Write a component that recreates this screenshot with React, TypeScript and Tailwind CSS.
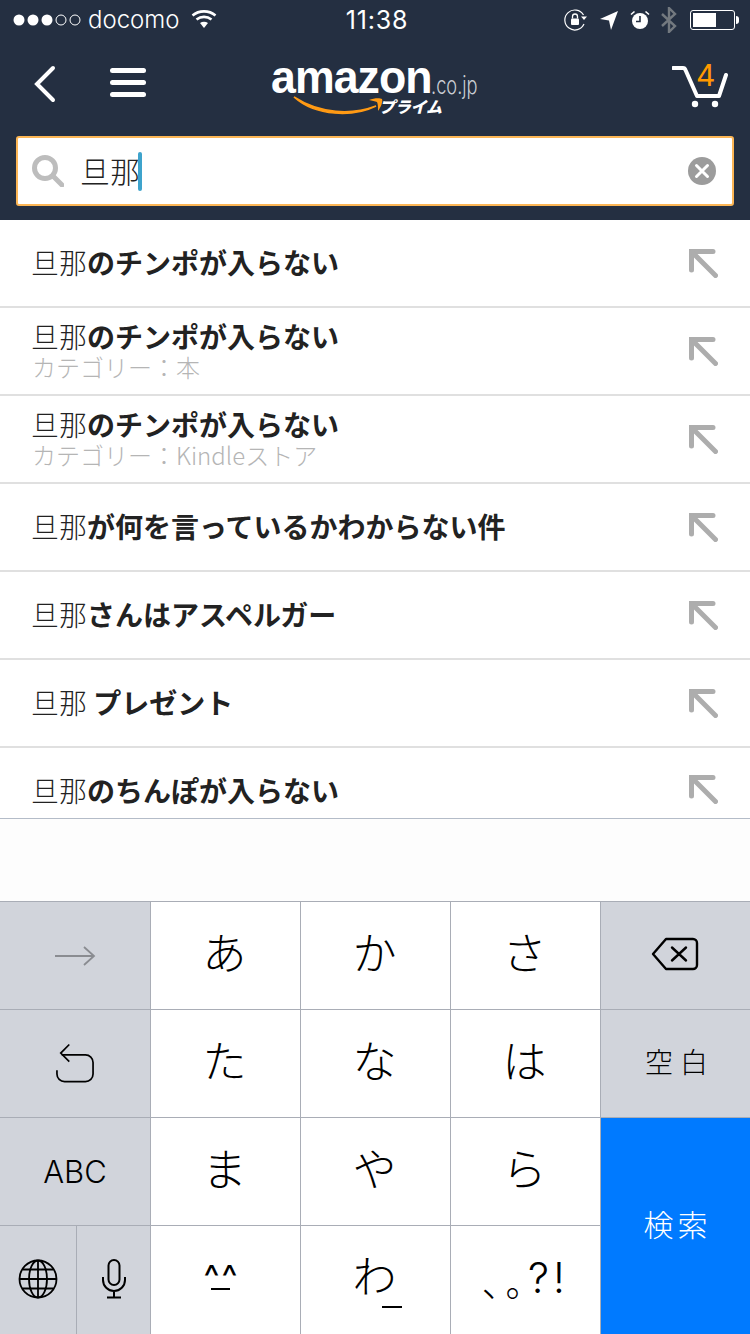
import React from 'react';

const jp = '[font-family:"Noto_Sans_CJK_JP","Noto_Sans",sans-serif]';

const suggestions = [
  { bold: 'のチンポが入らない' },
  { bold: 'のチンポが入らない', sub: 'カテゴリー：本' },
  { bold: 'のチンポが入らない', sub: 'カテゴリー：Kindleストア' },
  { bold: 'が何を言っているかわからない件' },
  { bold: 'さんはアスペルガー' },
  { bold: ' プレゼント' },
];

const StatusBar = () => (
  <div className="flex h-10 items-center justify-between pl-[13px] pr-[11px] text-white">
    <div className="flex w-[260px] items-center">
      <svg width="68" height="14" viewBox="0 0 68 14">
        {[6, 20, 34].map((cx) => (
          <circle key={cx} cx={cx} cy="7" r="5.5" fill="#fff" />
        ))}
        {[48, 62].map((cx) => (
          <circle key={cx} cx={cx} cy="7" r="5" fill="none" stroke="#fff" strokeWidth="1" />
        ))}
      </svg>
      <span className="ml-[7px] font-['Inter',sans-serif] text-[24px] leading-none font-light">docomo</span>
      <svg className="ml-[11px] mt-[-2px]" width="26" height="20" viewBox="0 0 26 20" fill="none" stroke="#fff" strokeWidth="2.6">
        <path d="M1.5 6.5C8 1 18 1 24.5 6.5" />
        <path d="M5.5 10.5C10 7 16 7 20.5 10.5" />
        <path d="M13 19l-4-5c2.4-1.6 5.6-1.6 8 0z" fill="#fff" stroke="none" />
      </svg>
    </div>
    <span className="ml-[2px] font-['Inter',sans-serif] text-[25px] leading-none font-normal tracking-[0.8px]">11:38</span>
    <div className="flex w-[260px] items-center justify-end">
      <svg width="24" height="22" viewBox="0 0 24 22" fill="none">
        <path d="M20 15A10 10 0 1 1 19.5 6" stroke="#fff" strokeWidth="1.2" />
        <path d="M17 7.5h6l-3 3.5z" fill="#fff" />
        <rect x="7" y="9.5" width="8" height="6.5" rx="1" fill="#fff" />
        <path d="M8.5 9.5V7.5a2.5 2.5 0 0 1 5 0v2" stroke="#fff" strokeWidth="1.3" />
      </svg>
      <svg className="ml-[12px]" width="18" height="19" viewBox="0 0 18 19">
        <path d="M18 0L11 19l-2-9.5L0 8z" fill="#fff" />
      </svg>
      <svg className="ml-[12px]" width="20" height="20" viewBox="0 0 20 20" fill="none">
        <circle cx="10" cy="11" r="8" fill="#fff" />
        <path d="M10 6v5.5H6" stroke="#242f41" strokeWidth="1.6" />
        <path d="M1 4.5L4.5 1.5M19 4.5L15.5 1.5" stroke="#fff" strokeWidth="1.6" />
      </svg>
      <svg className="ml-[11px]" width="16" height="26" viewBox="0 0 16 26" fill="none" stroke="#73797f" strokeWidth="2.4">
        <path d="M1 7l13 12-6 6V1l6 6L1 19" />
      </svg>
      <div className="ml-[13px] flex items-center">
        <div className="h-[20px] w-[45px] rounded-[3px] border border-white p-[2px]">
          <div className="h-full w-[23px] bg-white" />
        </div>
        <div className="ml-px h-[8px] w-[3px] rounded-r-sm bg-white" />
      </div>
    </div>
  </div>
);

const AmazonLogo = () => (
  <div className="relative h-[56px] w-[206px] text-white">
    <span className="absolute top-[0px] left-0 origin-left scale-x-[0.95] font-['Liberation_Sans',sans-serif] text-[47px] leading-[36px] font-bold tracking-[-1px]">
      amazon
    </span>
    <span className="absolute top-[17px] left-[160px] origin-left scale-x-[0.76] font-['Inter',sans-serif] text-[24px] leading-[20px] font-light text-[#c9cdd3]">
      .co.jp
    </span>
    <svg className="absolute top-[37px] left-[22px]" width="102" height="22" viewBox="0 0 102 22" fill="none">
      <path d="M1 1c26 17 58 18 82 9-22 11-60 11-82-9z" fill="#ff9a14" stroke="#ff9a14" strokeWidth="1.5" />
      <path d="M76 4c5-2 11-2 13-1 1 3-1 8-4 12 0-4 0-7-1-9-2-1-5-1-8-2z" fill="#ff9a14" />
    </svg>
    <span className={`absolute top-[37px] left-[108px] ${jp} text-[16px] leading-[20px] font-black tracking-[-0.2px] italic`}>
      プライム
    </span>
  </div>
);

const NavBar = () => (
  <div className="flex h-[96px] items-start pt-[23px] pl-[33px]">
    <svg width="24" height="38" viewBox="0 0 24 38" fill="none" stroke="#fff" strokeWidth="4" strokeLinecap="round" className="mt-[2px]">
      <path d="M20 3L4 19l16 16" />
    </svg>
    <div className="mt-[5px] ml-[53px] flex w-[36px] flex-col gap-[7px]">
      <div className="h-[5px] rounded-sm bg-white" />
      <div className="h-[5px] rounded-sm bg-white" />
      <div className="h-[5px] rounded-sm bg-white" />
    </div>
    <div className="mt-[-4px] ml-[125px]">
      <AmazonLogo />
    </div>
    <div className="relative ml-[195px] h-[42px] w-[57px]">
      <svg className="mt-[3px]" width="57" height="42" viewBox="0 0 57 42" fill="none">
        <path d="M1 2h10c1 0 2 .5 2.500 2l11.500 26h22L54 9" stroke="#fff" strokeWidth="4" strokeLinejoin="round" strokeLinecap="round" />
        <circle cx="23" cy="38" r="3.200" fill="#fff" />
        <circle cx="43" cy="38" r="3.200" fill="#fff" />
      </svg>
      <span className="absolute top-[-5px] left-[24px] font-['Inter',sans-serif] text-[30px] leading-[34px] text-[#f90]">4</span>
    </div>
  </div>
);

const SearchBox = () => (
  <div className="mx-4 flex h-[70px] items-center rounded-[3px] border-2 border-[#fcb655] bg-white pr-[16px] pl-[14px]">
    <svg width="32" height="32" viewBox="0 0 32 32" fill="none" stroke="#bdbdbd">
      <circle cx="13" cy="13" r="10.500" strokeWidth="5" />
      <path d="M21 21l9 9" strokeWidth="5" strokeLinecap="round" />
    </svg>
    <span className={`ml-[16px] mt-[-3px] ${jp} text-[30px] leading-none font-light text-[#222]`}>旦那</span>
    <div className="ml-[-2px] h-[39px] w-1 rounded-full bg-[#3ea3cc]" />
    <svg className="ml-auto" width="28" height="28" viewBox="0 0 28 28">
      <circle cx="14" cy="14" r="14" fill="#9c9c9c" />
      <path d="M8.500 8.500l11 11M19.500 8.500l-11 11" stroke="#fff" strokeWidth="3" strokeLinecap="round" />
    </svg>
  </div>
);

const FillArrow = () => (
  <svg width="30" height="30" viewBox="0 0 30 30" fill="none" stroke="#adadad" strokeWidth="5" strokeLinejoin="miter">
    <path d="M3.500 22V3.500H25" strokeLinecap="round" />
    <path d="M4 4L27.500 27.500" strokeLinecap="round" />
  </svg>
);

const SuggestionText = ({ bold }: { bold: string }) => (
  <div className={`${jp} text-[28px] leading-[32px] whitespace-pre text-[#222]`}>
    <span className="font-light">旦那</span>
    <span className="font-semibold">{bold}</span>
  </div>
);

const SuggestionRow = ({ bold, sub }: { bold: string; sub?: string }) => (
  <div className="flex h-[88px] items-center justify-between border-b-2 border-[#e0e0e0] pr-[32px] pl-[31px]">
    <div className={sub ? 'mt-[-1px]' : 'mt-[-2px]'}>
      <SuggestionText bold={bold} />
      {sub && <div className={`${jp} pl-[1px] text-[24px] leading-[30px] font-light text-[#b5b5b5]`}>{sub}</div>}
    </div>
    <div>
      <FillArrow />
    </div>
  </div>
);

const Key = ({ children, gray, className }: { children?: React.ReactNode; gray?: boolean; className?: string }) => (
  <div className={`flex items-center justify-center border-t border-l border-[#a9adb6] first:border-l-0 ${gray ? 'bg-[#d1d4db]' : 'bg-white'} ${className ?? ''}`}>
    {children}
  </div>
);

const Kana = ({ children }: { children: React.ReactNode }) => (
  <span className={`${jp} mt-[-10px] ml-[-2px] inline-block text-[44px] leading-none font-light text-black`}>{children}</span>
);

const Keyboard = () => (
  <div className="grid grid-cols-[150px_150px_150px_150px_150px] grid-rows-[108px_108px_108px_109px] bg-[#a9adb6]">
    <Key gray className="border-l-0">
      <svg width="42" height="22" viewBox="0 0 42 22" fill="none" stroke="#8a8c91" strokeWidth="1.800">
        <path d="M1 11h39M30 2l10 9-10 9" />
      </svg>
    </Key>
    <Key><Kana>あ</Kana></Key>
    <Key><Kana>か</Kana></Key>
    <Key><Kana>さ</Kana></Key>
    <Key gray>
      <svg width="48" height="34" viewBox="0 0 48 34" fill="none" stroke="#000" strokeWidth="2.400" strokeLinejoin="round" className="mt-[-3px] ml-[-2px]">
        <path d="M15 2h27a4 4 0 0 1 4 4v22a4 4 0 0 1-4 4H15L2 17z" />
        <path d="M21 10.500l14 13M35 10.500l-14 13" strokeLinecap="round" />
      </svg>
    </Key>

    <Key gray className="border-l-0">
      <svg width="38" height="41" viewBox="0 0 40 42" fill="none" stroke="#000" strokeWidth="1.800">
        <path d="M1 28v4a8 8 0 0 0 8 8h22a8 8 0 0 0 8-8v-12a8 8 0 0 0-8-8H6" />
        <path d="M14 1L5 10l9 9" />
      </svg>
    </Key>
    <Key><Kana>た</Kana></Key>
    <Key><Kana>な</Kana></Key>
    <Key><Kana>は</Kana></Key>
    <Key gray>
      <span className={`${jp} mt-[-5px] ml-[9px] text-[28px] leading-none font-light tracking-[7px] text-black`}>空白</span>
    </Key>

    <Key gray className="border-l-0">
      <span className="font-['Inter',sans-serif] text-[31px] leading-none font-light text-black">ABC</span>
    </Key>
    <Key><Kana>ま</Kana></Key>
    <Key><Kana>や</Kana></Key>
    <Key><Kana>ら</Kana></Key>
    <div className="row-span-2 flex items-center justify-center border-t border-l border-[#a9adb6] bg-[#007aff]">
      <span className={`${jp} mt-[-7px] ml-[4px] text-[30px] leading-none font-light tracking-[4px] text-white`}>検索</span>
    </div>

    <div className="grid grid-cols-[76px_74px] border-t border-[#a9adb6] bg-[#d1d4db]">
      <div className="flex items-center justify-center">
        <svg className="mt-[-2px]" width="40" height="40" viewBox="0 0 40 40" fill="none" stroke="#000" strokeWidth="1.800">
          <circle cx="20" cy="20" r="18.500" />
          <ellipse cx="20" cy="20" rx="9" ry="18.500" />
          <path d="M20 1.500v37M1.500 20h37M4.500 10.500h31M4.500 29.500h31" />
        </svg>
      </div>
      <div className="flex items-center justify-center border-l border-[#a9adb6]">
        <svg className="mt-[-2px]" width="24" height="40" viewBox="0 0 24 40" fill="none" stroke="#000" strokeWidth="2">
          <rect x="6.500" y="1" width="11" height="25" rx="5.500" />
          <path d="M1 18v3a11 11 0 0 0 22 0v-3M12 32v6M5 38.500h14" />
        </svg>
      </div>
    </div>
    <Key>
      <span className="relative mt-[-6px] mr-[8px] font-['Inter',sans-serif] text-[34px] leading-none tracking-[2px] text-black">
        ^^
        <span className="absolute top-[28px] left-[8px] h-[2px] w-[19px] bg-black" />
      </span>
    </Key>
    <Key>
      <span className="relative">
        <Kana>わ</Kana>
        <span className="absolute right-[-5px] bottom-[-9px] h-[2px] w-[20px] bg-black" />
      </span>
    </Key>
    <Key>
      <span className="mt-[-4px] flex items-end text-black">
        <span className={`${jp} text-[36px] leading-none font-light tracking-[5px] [font-feature-settings:"palt"]`}>、。</span>
        <span className="font-['Inter',sans-serif] text-[42px] leading-none font-light tracking-[4px]">?!</span>
      </span>
    </Key>
  </div>
);

export default function App() {
  return (
    <div className="flex h-[1334px] w-[750px] flex-col overflow-hidden bg-[#fdfdfd]">
      <header className="h-[220px] bg-[#242f41]">
        <StatusBar />
        <NavBar />
        <SearchBox />
      </header>

      <div className="bg-white">
        {suggestions.map((item, i) => (
          <SuggestionRow key={i} bold={item.bold} sub={item.sub} />
        ))}
        <div className="flex h-[71px] items-start justify-between border-b border-[#b4bcc8] pt-[26px] pr-[32px] pl-[31px]">
          <SuggestionText bold="のちんぽが入らない" />
          <FillArrow />
        </div>
      </div>

      <div className="mt-auto">
        <Keyboard />
      </div>
    </div>
  );
}
